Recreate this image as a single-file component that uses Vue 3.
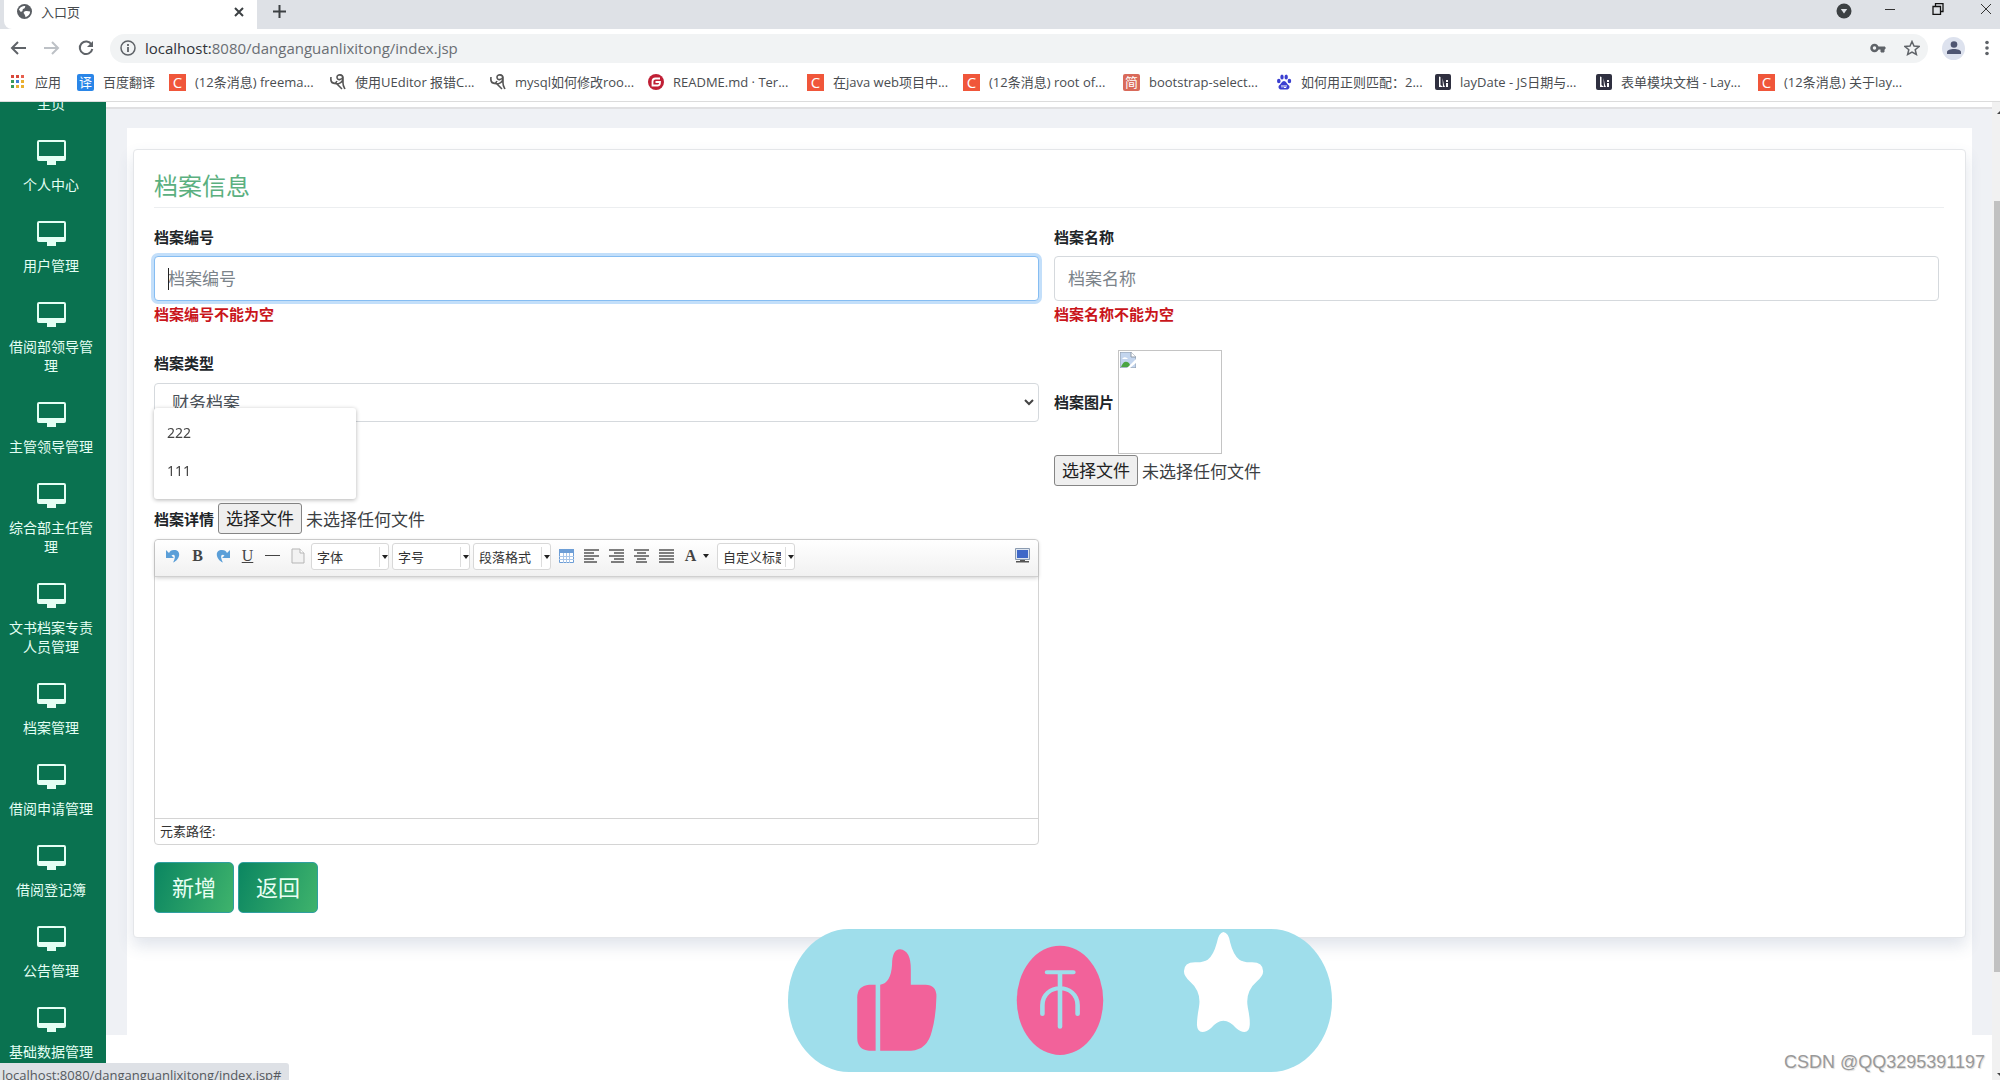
<script setup>
const bookmarks = [
  { icon: 'apps', text: '应用' },
  { icon: 'tile', glyph: '译', tone: 'blue', text: '百度翻译' },
  { icon: 'tile', glyph: 'C', tone: 'orange', text: '(12条消息) freema...' },
  { icon: 'swirl', text: '使用UEditor 报错C...' },
  { icon: 'swirl', text: 'mysql如何修改roo...' },
  { icon: 'gitee', text: 'README.md · Ter...' },
  { icon: 'tile', glyph: 'C', tone: 'orange', text: '在java web项目中...' },
  { icon: 'tile', glyph: 'C', tone: 'orange', text: '(12条消息) root of...' },
  { icon: 'tile', glyph: '简', tone: 'brick', text: 'bootstrap-select...' },
  { icon: 'paw', text: '如何用正则匹配：2...' },
  { icon: 'lay', text: 'layDate - JS日期与...' },
  { icon: 'lay', text: '表单模块文档 - Lay...' },
  { icon: 'tile', glyph: 'C', tone: 'orange', text: '(12条消息) 关于lay...' },
]
const appDots = ['#d9483b', '#d9483b', '#e8604f', '#3b9a5a', '#3f7fd6', '#e9b030', '#3b9a5a', '#e9b030', '#e9b030']
const menu = [
  '主页', '个人中心', '用户管理', '借阅部领导管理', '主管领导管理', '综合部主任管理',
  '文书档案专责人员管理', '档案管理', '借阅申请管理', '借阅登记簿', '公告管理', '基础数据管理',
]
const combos = ['字体', '字号', '段落格式']
const aligns = [
  { name: '左对齐', d: 'M0 1h15M0 4h10M0 7h15M0 10h10M0 13h13' },
  { name: '右对齐', d: 'M0 1h15M5 4h10M0 7h15M5 10h10M2 13h13' },
  { name: '居中对齐', d: 'M0 1h15M3 4h9M0 7h15M3 10h9M2 13h11' },
  { name: '两端对齐', d: 'M0 1h15M0 4h15M0 7h15M0 10h15M0 13h15' },
]
</script>

<template>
  <div class="window">
    <header class="chrome">
      <div class="tabs">
        <div class="tab">
          <svg class="i14" viewBox="0 0 16 16"><circle cx="8" cy="8" r="8" fill="#5a5e63" /><path d="M2 6c2-4 5-4 7-4-1 2 0 2-2 3s0 2-2 3-1-1-3-2zM8 8c3-1 4 0 6 0 0 3-2 5-5 6 0-2-1-2-1-3s-2-1 0-3z" fill="#fff" /></svg>
          <span class="tab-title">入口页</span>
          <button class="plain" aria-label="关闭标签"><svg width="10" height="10" viewBox="0 0 10 10"><path d="M1 1l8 8M9 1l-8 8" stroke="#3c4043" stroke-width="2" /></svg></button>
        </div>
        <button class="plain new-tab" aria-label="新标签"><svg width="13" height="13" viewBox="0 0 13 13"><path d="M6.500 0v13M0 6.500h13" stroke="#3c4043" stroke-width="2" /></svg></button>
        <div class="win-buttons">
          <button class="plain search" aria-label="搜索标签"><svg width="16" height="16" viewBox="0 0 16 16"><circle cx="8" cy="8" r="7.500" fill="#3c4043" /><path d="M4.800 6h6.400L8 10.500z" fill="#dee1e6" /></svg></button>
          <button class="plain" aria-label="最小化"><svg width="12" height="12" viewBox="0 0 12 12"><path d="M1 6.500h10" stroke="#333" /></svg></button>
          <button class="plain" aria-label="还原"><svg width="12" height="12" viewBox="0 0 12 12"><path d="M1 3.500h7.500v8H1zM3.500 3.500v-3h7.500v8H8.500" fill="none" stroke="#111" stroke-width="1.300" /></svg></button>
          <button class="plain" aria-label="关闭"><svg width="12" height="12" viewBox="0 0 12 12"><path d="M1 1l10 10M11 1L1 11" stroke="#333" /></svg></button>
        </div>
      </div>
      <div class="nav">
        <button class="plain" aria-label="后退"><svg width="16" height="14" viewBox="0 0 16 14"><path d="M16 7H2M8 1L2 7l6 6" fill="none" stroke="#5f6368" stroke-width="2" /></svg></button>
        <button class="plain" aria-label="前进"><svg width="16" height="14" viewBox="0 0 16 14"><path d="M0 7h14M8 1l6 6-6 6" fill="none" stroke="#bdc1c6" stroke-width="2" /></svg></button>
        <button class="plain" aria-label="刷新"><svg width="16" height="16" viewBox="0 0 16 16"><path d="M13.500 4.500A6.300 6.300 0 1 0 14.300 9" fill="none" stroke="#5f6368" stroke-width="2" /><path d="M15 1v6H9z" fill="#5f6368" /></svg></button>
        <div class="omnibox">
          <svg width="16" height="16" viewBox="0 0 16 16"><circle cx="8" cy="8" r="7" fill="none" stroke="#5f6368" stroke-width="1.500" /><path d="M8 7v5M8 4v2" stroke="#5f6368" stroke-width="1.800" /></svg>
          <span class="url"><b>localhost:</b>8080/danganguanlixitong/index.jsp</span>
          <svg width="16" height="10" viewBox="0 0 16 10"><circle cx="4.500" cy="5" r="3" fill="none" stroke="#5f6368" stroke-width="2.500" /><path d="M8 4h7v2h-1v3h-3V6H8z" fill="#5f6368" stroke="#5f6368" /></svg>
          <svg width="16" height="16" viewBox="0 0 16 16"><path d="M8 1.500l2 4.500 5 .500-3.800 3.200 1.200 4.800L8 12l-4.400 2.500 1.200-4.800L1 6.500 6 6z" fill="none" stroke="#5f6368" stroke-width="1.500" /></svg>
        </div>
        <span class="avatar"><svg width="14" height="14" viewBox="0 0 14 14"><circle cx="7" cy="3.500" r="3.300" fill="#4f5672" /><path d="M0 13v-2c0-4 14-4 14 0v2z" fill="#4f5672" /></svg></span>
        <button class="plain" aria-label="菜单"><svg width="4" height="16" viewBox="0 0 4 16"><g fill="#5f6368"><circle cx="2" cy="2.500" r="1.800" /><circle cx="2" cy="8" r="1.800" /><circle cx="2" cy="13.500" r="1.800" /></g></svg></button>
      </div>
      <nav class="bookmarks">
        <a v-for="(b, i) in bookmarks" :key="i" href="#" class="bookmark">
          <svg v-if="b.icon === 'apps'" class="i16" viewBox="0 0 16 16"><rect v-for="(c, n) in appDots" :key="n" :x="1 + (n % 3) * 5" :y="1 + Math.floor(n / 3) * 5" width="3" height="3" :fill="c" /></svg>
          <span v-else-if="b.icon === 'tile'" class="tile" :class="b.tone">{{ b.glyph }}</span>
          <svg v-else-if="b.icon === 'swirl'" class="i16" viewBox="0 0 16 16"><path d="M1 3c-1 7 4 8 6 4M2 8c5 4 11 1 11-4 0-4-6-4-6-1 0 4 5 3 6 0v6c0 3 1 4 2 6M6 9l6 6" fill="none" stroke="#555" stroke-width="1.600" /></svg>
          <svg v-else-if="b.icon === 'gitee'" class="i16" viewBox="0 0 16 16"><circle cx="8" cy="8" r="8" fill="#c01f35" /><path d="M12 4.500H7.500c-2 0-3 1-3 3v4H10c1.500 0 2-1 2-3.500H7.500" fill="none" stroke="#fff" stroke-width="1.800" /></svg>
          <svg v-else-if="b.icon === 'paw'" class="i16" viewBox="0 0 16 16"><g fill="#3b3fd0"><ellipse cx="2.800" cy="7" rx="1.800" ry="2.300" /><ellipse cx="6" cy="3" rx="1.700" ry="2.500" /><ellipse cx="10.200" cy="3" rx="1.700" ry="2.500" /><ellipse cx="13.400" cy="7" rx="1.800" ry="2.300" /><path d="M8 7c2 0 3 3 5 4.500 1.500 2-.500 4.500-3 4H6c-2.500.500-4.500-2-3-4C5 10 6 7 8 7z" /></g><path d="M6 11v2.500M8 11v2.500h2V11" stroke="#fff" fill="none" /></svg>
          <svg v-else class="i16" viewBox="0 0 16 16"><rect width="16" height="16" rx="2" fill="#2f3040" /><path d="M4 2.500l1.500.500v8L8 13H4zM7.500 4l1.500 7 1 2H8zM11 6h2v2h-2zM11 9h2v4h-2z" fill="#fff" /></svg>
          <span>{{ b.text }}</span>
        </a>
      </nav>
    </header>

    <div class="viewport">
      <aside class="sidebar">
        <ul>
          <li v-for="m in menu" :key="m">
            <a href="#">
              <svg width="29" height="25" viewBox="0 0 29 25"><path fill-rule="evenodd" d="M2 0h25q2 0 2 2v17q0 2-2 2h-8v4h-9v-4H2q-2 0-2-2V2Q0 0 2 0zM2 2v14h25V2z" fill="#e4fff4" /></svg>
              <span>{{ m }}</span>
            </a>
          </li>
        </ul>
      </aside>

      <main class="content">
        <div class="strip"></div>
        <div class="stage">
          <div class="panel">
            <form class="card" @submit.prevent>
              <h1>档案信息</h1>
              <div class="grid">
                <div class="field first">
                  <label for="code">档案编号</label>
                  <input id="code" class="text focused" type="text" placeholder="档案编号" />
                  <i class="caret"></i>
                  <p class="error">档案编号不能为空</p>
                  <ul class="suggest"><li>222</li><li>111</li></ul>
                </div>
                <div class="field">
                  <label for="name">档案名称</label>
                  <input id="name" class="text" type="text" placeholder="档案名称" />
                  <p class="error">档案名称不能为空</p>
                </div>
              </div>
              <div class="grid second">
                <div class="field type">
                  <label for="type">档案类型</label>
                  <div class="select">
                    <select id="type"><option>财务档案</option></select>
                    <svg width="10" height="7" viewBox="0 0 10 7"><path d="M1 1l4 4 4-4" fill="none" stroke="#444" stroke-width="2" /></svg>
                  </div>
                </div>
                <div class="field">
                  <div class="picture">
                    <label for="photo">档案图片</label>
                    <div class="thumb" role="img" aria-label="档案图片">
                      <svg width="16" height="16" viewBox="0 0 16 16"><path d="M0 0h11l5 5v11H0z" fill="#c3d5ee" stroke="#8e9aa8" /><path d="M11 0v5h5" fill="#fff" stroke="#8e9aa8" /><path d="M2 7q2-3 5-1l1 1H2z" fill="#fff" /><path d="M1 15q3-8 8-4l2 4z" fill="#4ba543" /><path d="M16 7v4l-6 5H7z" fill="#fff" /></svg>
                    </div>
                  </div>
                  <div class="file">
                    <input id="photo" type="file" /><span class="pick">选择文件</span><span>未选择任何文件</span>
                  </div>
                </div>
              </div>
              <div class="grid third">
                <div class="field">
                  <div class="detail">
                    <label for="detail">档案详情</label>
                    <div class="file">
                      <input id="detail" type="file" /><span class="pick">选择文件</span><span>未选择任何文件</span>
                    </div>
                  </div>
                  <div class="editor">
                    <div class="toolbar">
                      <button type="button" class="tool" aria-label="撤销"><svg width="14" height="14" viewBox="0 0 14 14"><path d="M0 1v8h8L5.500 6.500c3-2 5 .500 1.500 7C14 11 16 1 8 1 5 1 4 2 3 4z" fill="#5b9fd8" /></svg></button>
                      <button type="button" class="tool glyph" aria-label="加粗">B</button>
                      <button type="button" class="tool" aria-label="重做"><svg width="14" height="14" viewBox="0 0 14 14"><path d="M14 1v8H6l2.500-2.500c-3-2-5 .500-1.500 7C0 11-2 1 6 1c3 0 4 1 5 3z" fill="#5b9fd8" /></svg></button>
                      <button type="button" class="tool glyph under" aria-label="下划线">U</button>
                      <button type="button" class="tool" aria-label="分隔线"><svg width="15" height="14" viewBox="0 0 15 14"><path d="M0 6.500h15" stroke="#444" /></svg></button>
                      <button type="button" class="tool" aria-label="新建"><svg width="14" height="16" viewBox="0 0 14 16"><path d="M1 1h8l4 4v10H1z" fill="#f2f2f2" stroke="#b5b5b5" /><path d="M9 1v4h4" fill="#fff" stroke="#b5b5b5" /></svg></button>
                      <div v-for="c in combos" :key="c" class="combo">
                        <select :aria-label="c"><option>{{ c }}</option></select>
                        <svg width="6" height="4" viewBox="0 0 6 4"><path d="M0 0h6L3 4z" fill="#222" /></svg>
                      </div>
                      <div class="tools">
                        <button type="button" class="tool" aria-label="表格"><svg width="15" height="14" viewBox="0 0 15 14"><path d="M.500.500h14v13H.500z" fill="#fff" stroke="#6d9ed6" /><path d="M0 0h15v4H0z" fill="#6d9ed6" /><path d="M0 7.500h15M0 10.500h15M4.500 4v10M7.500 4v10M10.500 4v10" stroke="#a9c6e8" /></svg></button>
                        <button v-for="a in aligns" :key="a.name" type="button" class="tool" :aria-label="a.name"><svg width="15" height="14" viewBox="0 0 15 14"><path :d="a.d" stroke="#555" stroke-width="1.500" /></svg></button>
                        <button type="button" class="tool glyph wide" aria-label="字体颜色">A<svg width="6" height="4" viewBox="0 0 6 4"><path d="M0 0h6L3 4z" fill="#222" /></svg></button>
                      </div>
                      <div class="combo">
                        <select aria-label="自定义标题"><option>自定义标题</option></select>
                        <svg width="6" height="4" viewBox="0 0 6 4"><path d="M0 0h6L3 4z" fill="#222" /></svg>
                      </div>
                      <button type="button" class="tool full" aria-label="全屏"><svg width="15" height="15" viewBox="0 0 15 15"><path d="M.500.500h14v11H.500z" fill="#dfe6f0" stroke="#8b9bb0" /><path d="M2 2h11v8H2z" fill="#3f68c8" /><path d="M5 12h5v1H5zM1 13h13v1.500H1z" fill="#555" /></svg></button>
                    </div>
                    <textarea aria-label="档案详情内容"></textarea>
                    <div class="path">元素路径:</div>
                  </div>
                </div>
              </div>
              <div class="actions">
                <button type="submit">新增</button>
                <button type="button">返回</button>
              </div>
            </form>
          </div>
        </div>
      </main>

      <div class="scrollbar">
        <svg width="8" height="20" viewBox="0 0 8 20"><path d="M5 12l3-3v3z" fill="#444" /></svg>
        <div class="thumb-bar"></div>
        <svg width="8" height="8" viewBox="0 0 8 8"><path d="M5 1h3v3z" fill="#444" /></svg>
      </div>
    </div>

    <div class="status">localhost:8080/danganguanlixitong/index.jsp#</div>

    <svg class="reactions" viewBox="48 87 1422 429" preserveAspectRatio="none">
      <rect x="48" y="87" width="1422" height="429" rx="160" ry="214" fill="#9fdeeb" />
      <g fill="#f2629a">
        <path d="M277 254v198h-17q-31-3-31-38V292q0-34 31-38z" />
        <path d="M289 452V254q28-5 31-60 0-45 21-46 28 3 28 60v46h38q29 0 29 35-1 60-12 105-12 56-54 58z" />
        <ellipse cx="759" cy="301" rx="113" ry="164" />
      </g>
      <g fill="none" stroke="#9fdeeb" stroke-width="12" stroke-linecap="round">
        <path d="M725 217h69M759 217v163M713 342v-26c0-68 92-68 92 0v26" />
      </g>
      <path d="M1186 96q14 2 18 32 8 37 24 51 8 7 29 8 33-2 33 27 0 14-16 30-32 32-24 79 6 32 5 52-1 21-14 21-10 0-22-12-15-21-33-22-17 1-32 22-12 12-23 12-13-1-14-21 0-22 5-52 8-47-24-79-15-16-15-30 0-29 33-27 20-1 29-8 15-13 24-51 5-30 17-32z" fill="#fff" />
    </svg>
    <div class="watermark">CSDN @QQ3295391197</div>
  </div>
</template>

<style>
body { margin: 0; }
</style>

<style scoped>
* { box-sizing: border-box; }
ul, p, h1 { margin: 0; padding: 0; list-style: none; }
a { color: inherit; text-decoration: none; }
svg { display: block; flex: none; }
button, input, select, textarea { font-family: inherit; }
.window { position: relative; display: flex; flex-direction: column; height: 100vh; overflow: hidden; background: #fff; color: #212529; font-family: "Noto Sans", "Noto Sans CJK SC", sans-serif; }
.plain { display: flex; padding: 0; border: 0; background: none; }
.i14 { width: 15px; height: 15px; }
.i16 { width: 16px; height: 16px; }

.chrome { flex: none; border-bottom: 1px solid #dcdcdc; }
.tabs { display: flex; height: 29px; background: #dee1e6; }
.tab { display: flex; align-items: center; width: 253px; margin-left: 4px; padding: 0 13px 6px; background: #fff; border-radius: 0 0 0 8px; }
.tab-title { flex: 1; margin-left: 9px; font-size: 13px; line-height: 20px; color: #45494d; }
.new-tab { padding: 5px 16px 0; align-self: flex-start; }
.win-buttons { display: flex; align-items: flex-start; gap: 36px; margin-left: auto; padding: 3px 8px 0 0; }
.search { margin-right: -4px; }
.nav { display: flex; align-items: center; height: 38px; padding: 0 11px 0 10px; gap: 18px; }
.omnibox { display: flex; flex: 1; align-items: center; gap: 18px; height: 29px; margin: 0 2px 0 -2px; padding: 0 8px 0 10px; border-radius: 15px; background: #f1f3f4; }
.url { flex: 1; margin-left: -9px; font-family: "Open Sans", "Noto Sans", sans-serif; font-size: 15px; line-height: 24px; color: #6a6e73; }
.url b { font-weight: 400; color: #303338; }
.omnibox + .avatar { margin-left: -6px; }
.avatar { display: grid; place-items: center; width: 23px; height: 23px; margin-right: 2px; border-radius: 50%; background: #dde2ee; }
.bookmarks { display: grid; grid-template-columns: 67px 92px 161px 160px 158px 159px 156px 160px 153px 159px 161px 162px 1fr; height: 34px; padding: 1px 0 5px 10px; }
.bookmark { display: flex; align-items: center; gap: 9px; font-family: "Open Sans", "Noto Sans CJK SC", sans-serif; font-size: 13px; line-height: 20px; color: #4a4d51; white-space: nowrap; }
.tile { display: grid; place-items: center; flex: none; width: 17px; height: 17px; color: #fff; font-size: 13px; line-height: 17px; }
.blue { background: #2a86e8; border-radius: 2px; }
.orange { background: #f0563a; font-size: 15px; }
.brick { background: #d96a5a; border-radius: 2px; }

.viewport { display: flex; flex: 1; min-height: 0; }
.sidebar { flex: none; width: 106px; margin-bottom: 16px; overflow: hidden; background: #0a7250; }
.sidebar ul { margin-top: -43px; }
.sidebar a { display: flex; flex-direction: column; align-items: center; gap: 10px; padding: 0 10px 27px 6px; color: #e4fff4; font-size: 14px; line-height: 19px; text-align: center; }
.sidebar li:last-child a { padding-bottom: 0; }
.content { display: flex; flex: 1; flex-direction: column; min-width: 0; padding-bottom: 45px; }
.strip { flex: none; height: 7px; border-bottom: 2px solid #e0e0e2; }
.stage { flex: 1; min-height: 0; padding: 19px 20px 0 21px; background: #eff1f5; }
.panel { height: 100%; padding: 21px 6px 0 6px; background: #fff; }
.card { padding: 18px 26px 24px 20px; border: 1px solid #e4e6e9; border-radius: 4px; background: #fff; box-shadow: 0 8px 16px rgba(60, 90, 130, 0.16); }
h1 { margin-right: -5px; padding-bottom: 3px; border-bottom: 1px solid #eceef0; color: #5bb07f; font-size: 24px; font-weight: 400; line-height: 36px; }
.grid { display: grid; grid-template-columns: 1fr 1fr; gap: 15px; margin-top: 17px; }
.second { margin-top: 24px; }
.field { position: relative; min-width: 0; }
label, .error { display: block; font-size: 15px; font-weight: 700; line-height: 24px; }
.text { display: block; width: 100%; height: 45px; margin-top: 7px; padding: 0 13px; border: 1px solid #d5d9dd; border-radius: 4px; background: #fff; font-size: 17px; }
.text::placeholder { color: #7b838a; opacity: 1; }
.focused { border-color: #86bdf2; box-shadow: 0 0 0 3px #c3dffa; }
.caret { position: absolute; top: 43px; left: 14px; width: 1px; height: 22px; background: #222; }
.error { margin-top: 1px; color: #c9151b; }
.suggest { position: absolute; z-index: 2; top: 183px; left: 0; width: 202px; padding: 6px 0 9px; border-radius: 3px; background: #fff; box-shadow: 0 1px 4px rgba(0, 0, 0, 0.3); }
.suggest li { padding: 0 13px; font-size: 14px; line-height: 38px; color: #444; }
.type { padding-top: 1px; }
.select { position: relative; margin-top: 8px; }
.select select { display: block; width: 100%; height: 39px; padding: 0 17px; border: 1px solid #d5d9dd; border-radius: 4px; background: #fff; color: #495057; font-size: 17px; appearance: none; }
.select svg { position: absolute; top: 16px; right: 5px; }
.picture { display: flex; align-items: center; gap: 4px; }
.thumb { width: 104px; height: 104px; padding: 1px; border: 1px solid #c4c4c4; }
.file { position: relative; display: flex; align-items: center; gap: 4px; width: max-content; height: 31px; font-size: 17px; color: #3c4043; }
.picture + .file { margin-top: 1px; }
.file input { position: absolute; inset: 0; width: 100%; opacity: 0; }
.pick { padding: 0 7px; border: 1px solid #858585; border-radius: 3px; background: #efefef; color: #222; line-height: 29px; }
.detail { display: flex; align-items: center; gap: 4px; }
.editor { margin-top: 5px; border: 1px solid #d4d4d4; border-radius: 4px; }
.toolbar { display: flex; align-items: flex-start; height: 37px; padding: 3px 3px 0 5px; border-bottom: 1px solid #d0d0d0; border-radius: 4px 4px 0 0; background: linear-gradient(#fff, #f1f1f1); box-shadow: 0 1px 4px rgba(0, 0, 0, 0.2); }
.tools { display: flex; margin: 0 1px; }
.tool { display: flex; align-items: center; justify-content: center; flex: none; width: 25px; height: 25px; padding: 0; border: 0; background: none; }
.glyph { font-family: "Liberation Serif", serif; font-size: 16px; font-weight: 700; color: #444; }
.under { font-weight: 400; text-decoration: underline; }
.wide { width: 36px; gap: 7px; }
.full { margin-left: auto; }
.combo { position: relative; flex: none; width: 78px; margin: 0 2px 0 1px; }
.combo select { display: block; width: 100%; height: 27px; padding: 0 13px 0 5px; border: 1px solid #d8d8d8; border-radius: 3px; background: linear-gradient(#ddd, #ddd) right 8px center / 1px 20px no-repeat #fff; color: #333; font-size: 13px; appearance: none; }
.combo svg { position: absolute; top: 12px; right: 1px; }
textarea { display: block; width: 100%; height: 241px; padding: 8px; border: 0; background: none; resize: none; outline: 0; }
.path { height: 26px; padding: 0 5px; border-top: 1px solid #d4d4d4; font-size: 13px; line-height: 25px; color: #333; }
.actions { display: flex; gap: 4px; margin-top: 17px; }
.actions button { width: 80px; height: 51px; padding: 0 0 3px; border: 1px solid #2f9fa0; border-radius: 5px; background: linear-gradient(110deg, #0b8661, #3fb36c); color: #e9fff4; font-size: 22px; }
.scrollbar { display: flex; flex: none; flex-direction: column; width: 8px; background: #f1f1f1; }
.thumb-bar { flex: 1; margin: 79px 0 100px 2px; background: #c1c1c1; }
.status { position: absolute; bottom: 0; left: 0; height: 17px; padding: 2px 8px 0 2px; overflow: hidden; border-radius: 0 3px 0 0; background: #dee1e6; color: #55595e; font-family: "Open Sans", "Noto Sans", sans-serif; font-size: 13px; line-height: 20px; }
.reactions { position: absolute; bottom: 8px; left: calc(50% - 212px); width: 544px; height: 143px; }
.watermark { position: absolute; right: 15px; bottom: 6px; color: #999; font-family: "Liberation Sans", sans-serif; font-size: 18px; line-height: 24px; text-shadow: 1px 1px 1px #ddd; }
</style>
